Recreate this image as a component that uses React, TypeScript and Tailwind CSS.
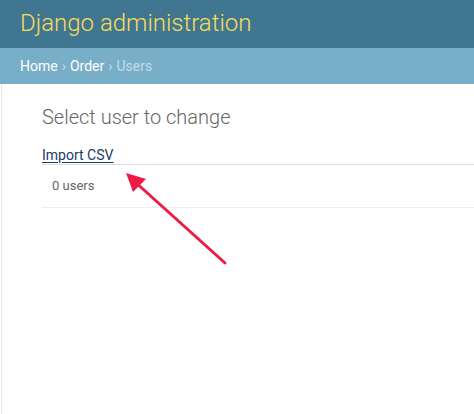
export default function App() {
  return (
    <div className="relative w-[474px] h-[414px] overflow-hidden bg-white font-['Roboto','Liberation_Sans',sans-serif]">
      {/* Header */}
      <div className="h-[48px] bg-[#417690] px-[20px] flex items-center">
        <h1 className="text-[24px] font-light text-[#f5dd5d] leading-none -mt-[2px]">Django administration</h1>
      </div>

      {/* Breadcrumbs */}
      <div className="h-[36px] bg-[#79aec8] px-[20px] flex items-center text-[14px] text-white">
        <a className="text-white">Home</a>
        <span className="mx-[4px] text-[#c4dce8]">›</span>
        <a className="text-white">Order</a>
        <span className="mx-[4px] text-[#c4dce8]">›</span>
        <span className="text-[#c4dce8]">Users</span>
      </div>

      {/* Content */}
      <div className="ml-px h-[330px] border-l border-[#e6e6e6] pl-[40px] pt-[21px]">
        <h2 className="text-[20px] font-light text-[#666] leading-[24px] mb-[18px]">Select user to change</h2>
        <div className="border-b border-[#ddd] h-[18px] leading-[16px]">
          <a href="#" className="text-[14px] text-[#1a3a6b] underline underline-offset-2">Import CSV</a>
        </div>
        <div className="border-b border-[#eee] h-[43px] pl-[10px] flex items-center text-[13px] text-[#666]">
          0 users
        </div>
      </div>

      {/* Annotation arrow */}
      <svg className="absolute left-0 top-0" width="474" height="414" viewBox="0 0 474 414">
        <line x1="225" y1="263" x2="134" y2="181" stroke="#ef1a45" strokeWidth="3" strokeLinecap="round" />
        <polygon points="126,173 146,179 133,192" fill="#ef1a45" />
      </svg>
    </div>
  );
}
